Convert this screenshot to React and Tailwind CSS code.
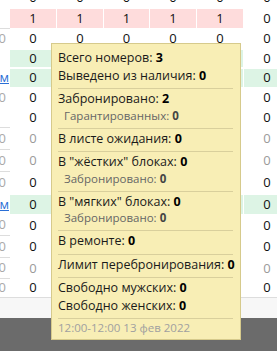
const rows = [
  { h: 20, a: "", vals: "000000" },
  { h: 21, a: "", vals: "111110", bg: "pink", sep: true },
  { h: 20, a: "0", vals: "000000" },
  { h: 19, a: "", vals: "000000", bg: "green" },
  { h: 20, a: "м", vals: "000000", bg: "green", lastBg: true },
  { h: 20, a: "0", vals: "000000" },
  { h: 20, a: "", vals: "000000", sep: true },
  { h: 22, a: "0", vals: "000000", gray: true, sep: true },
  { h: 22, a: "0", vals: "000000", gray: true, sep: true },
  { h: 22, a: "0", vals: "000000" },
  { h: 21, a: "м", vals: "000000", bg: "green", lastBg: true },
  { h: 21, a: "0", vals: "000000", sep: true },
  { h: 22, a: "0", vals: "000000", sep: true },
  { h: 21, a: "0", vals: "000000", gray: true, sep: true },
  { h: 18, a: "0", vals: "000000" },
];

const colWidths = ["w-[47px]", "w-[47px]", "w-[46px]", "w-[47px]", "w-[47px]", "w-[47px]"];

function Cell({ value, width, tint, gray }) {
  const bg = tint === "pink" ? "bg-[#fedcdc]" : tint === "green" ? "bg-[#ddf4e5]" : "";
  return (
    <div className={`${width} shrink-0 py-[1px] pr-[1px]`}>
      <div
        className={`flex h-full items-center justify-center ${bg} ${
          gray ? "text-[#9a9a9a]" : "text-[#111]"
        }`}
      >
        {value}
      </div>
    </div>
  );
}

function TableRow({ row }) {
  return (
    <div className="flex" style={{ height: row.h }}>
      <div
        className={`flex w-[10px] shrink-0 items-center justify-end overflow-hidden ${
          row.sep ? "border-b border-[#dddddd]" : ""
        }`}
      >
        {row.a === "м" ? (
          <span className="pr-[1px] text-[#2a6fd6] underline">м</span>
        ) : row.a === "0" ? (
          <span className="pr-[4px] text-[#a9a9a9]">0</span>
        ) : null}
      </div>
      {row.vals.split("").map((v, i) => (
        <Cell
          key={i}
          value={v}
          width={colWidths[i]}
          tint={i < 5 || row.lastBg ? row.bg : undefined}
          gray={row.gray}
        />
      ))}
    </div>
  );
}

function Line({ label, value }) {
  return (
    <div className="whitespace-nowrap leading-[17.5px] text-[#1a1a1a]">
      {label} <b className="font-bold text-black">{value}</b>
    </div>
  );
}

function SubLine({ label, value }) {
  return (
    <div className="whitespace-nowrap pl-[6px] text-[11.5px] leading-[16px] text-[#666]">
      {label} <b className="font-bold text-[#444]">{value}</b>
    </div>
  );
}

function Section({ first, children }) {
  return (
    <div className={first ? "pt-[5px] pb-[4px]" : "border-t border-[#d9cf9c] pt-[1px] pb-[4px]"}>
      {children}
    </div>
  );
}

export default function App() {
  return (
    <div className="relative flex h-[351px] w-[277px] flex-col overflow-hidden bg-white font-['Open_Sans',sans-serif] text-[13px]">
      <div className="-mt-[12px]">
        {rows.map((row, i) => (
          <TableRow key={i} row={row} />
        ))}
      </div>
      <div className="h-[21px] shrink-0 border-t border-[#dddddd] bg-[#f7f7f7]" />
      <div className="flex-1 bg-[#6b6b6b]" />

      <div className="absolute left-[51px] top-[43px] w-[190px] border border-[#d6ca8c] bg-[#f8eeb5] pl-[6px] pr-[7px] text-[12.5px]">
        <Section first>
          <Line label="Всего номеров:" value="3" />
          <Line label="Выведено из наличия:" value="0" />
        </Section>
        <Section>
          <Line label="Забронировано:" value="2" />
          <SubLine label="Гарантированных:" value="0" />
        </Section>
        <Section>
          <Line label="В листе ожидания:" value="0" />
        </Section>
        <Section>
          <Line label={'В "жёстких" блоках:'} value="0" />
          <SubLine label="Забронировано:" value="0" />
        </Section>
        <Section>
          <Line label={'В "мягких" блоках:'} value="0" />
          <SubLine label="Забронировано:" value="0" />
        </Section>
        <Section>
          <Line label="В ремонте:" value="0" />
        </Section>
        <Section>
          <Line label="Лимит перебронирования:" value="0" />
        </Section>
        <Section>
          <Line label="Свободно мужских:" value="0" />
          <Line label="Свободно женских:" value="0" />
        </Section>
        <div className="whitespace-nowrap border-t border-[#d9cf9c] pt-[1px] pb-[3px] text-[11.5px] leading-[16px] text-[#a0a0a0]">
          12:00-12:00 13 фев 2022
        </div>
      </div>
    </div>
  );
}
